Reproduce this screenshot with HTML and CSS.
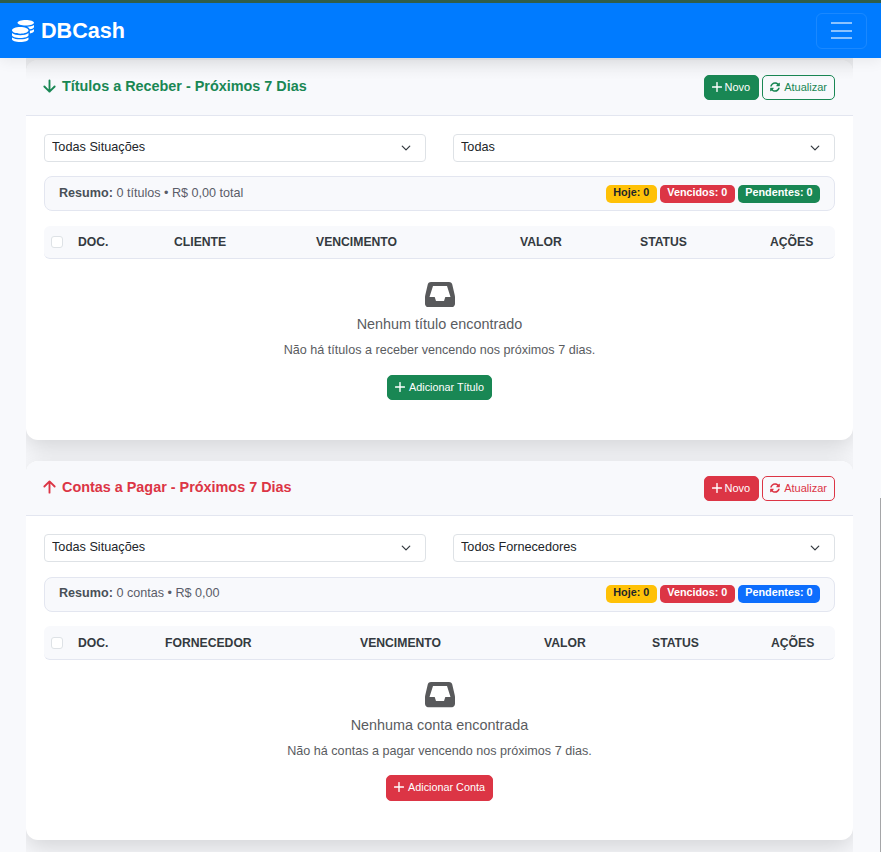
FILE: index.html
```html
<!DOCTYPE html>
<html lang="pt-BR">
<head>
<meta charset="utf-8">
<title>DBCash</title>
<link rel="stylesheet" href="styles.css">
</head>
<body>
<svg class="defs" width="0" height="0" aria-hidden="true">
  <symbol id="i-plus" viewBox="0 0 10 10"><path d="M5 .6v8.800M.6 5h8.800" fill="none" stroke="currentColor" stroke-width="1.400" stroke-linecap="round"/></symbol>
  <symbol id="i-sync" viewBox="0 0 512 512"><path fill="currentColor" d="M370.72 133.28C339.458 104.008 298.888 87.962 255.848 88c-77.458.068-144.328 53.178-162.791 126.85-1.344 5.363-6.122 9.15-11.651 9.15H24.103c-7.498 0-13.194-6.807-11.807-14.176C33.933 94.924 134.813 8 256 8c66.448 0 126.791 26.136 171.315 68.685L463.03 40.97C478.149 25.851 504 36.559 504 57.941V192c0 13.255-10.745 24-24 24H345.941c-21.382 0-32.090-25.851-16.971-40.971l41.750-41.749zM32 296h134.059c21.382 0 32.090 25.851 16.971 40.971l-41.750 41.750c31.262 29.273 71.835 45.319 114.876 45.280 77.418-.07 144.315-53.144 162.787-126.849 1.344-5.363 6.122-9.150 11.651-9.150h57.304c7.498 0 13.194 6.807 11.807 14.176C478.067 417.076 377.187 504 256 504c-66.448 0-126.791-26.136-171.315-68.685L48.970 471.030C33.851 486.149 8 475.441 8 454.059V320c0-13.255 10.745-24 24-24z"/></symbol>
  <symbol id="i-inbox" viewBox="0 0 30 25.500"><path fill="currentColor" fill-rule="evenodd" d="M6 0h18c1.500 0 2.700.9 3.200 2.300L29.700 13c.2.800.3 1.500.3 2.300v6.500c0 2-1.600 3.700-3.700 3.700H3.700C1.600 25.500 0 23.800 0 21.800v-6.500c0-.8.1-1.500.3-2.300L2.800 2.300C3.300.9 4.500 0 6 0zM8 4 4.500 15h5.200l1.300 4h8l1.300-4h5.200L22 4H8z"/></symbol>
  <symbol id="i-coins" viewBox="0 0 512 512"><path fill="currentColor" d="M0 405.300V448c0 35.300 86 64 192 64s192-28.700 192-64v-42.700C342.700 434.400 267.200 448 192 448S41.300 434.400 0 405.300zM320 128c106 0 192-28.700 192-64S426 0 320 0 128 28.700 128 64s86 64 192 64zM0 300.400V352c0 35.300 86 64 192 64s192-28.700 192-64v-51.600c-41.300 34-116.900 51.600-192 51.600S41.300 334.400 0 300.400zm416 11c57.300-11.100 96-31.700 96-55.400v-42.700c-23.200 16.400-57.300 27.600-96 34.500v63.600zM192 160C86 160 0 195.800 0 240s86 80 192 80 192-35.800 192-80-86-80-192-80zm219.300 56.300c60-10.800 100.700-32 100.700-56.300v-42.700c-35.500 25.100-96.500 38.600-160.700 41.800 29.500 14.300 51.200 33.500 60 57.200z"/></symbol>
</svg>

<header class="navbar">
  <a class="brand" href="#">
    <svg class="brand-icon"><use href="#i-coins"/></svg>
    <span>DBCash</span>
  </a>
  <button class="toggler" type="button" aria-label="Menu">
    <span></span><span></span><span></span>
  </button>
</header>

<main class="page">
  <div class="stack">
    <section class="card theme-green">
      <div class="card-head">
        <h2 class="card-title">
          <svg class="arrow" viewBox="0 0 16 16"><path d="M8 2v12M2.500 8.500 8 14l5.500-5.500" fill="none" stroke="currentColor" stroke-width="2" stroke-linecap="round" stroke-linejoin="round"/></svg>
          Títulos a Receber - Próximos 7 Dias
        </h2>
        <div class="head-actions">
          <button class="btn btn-solid" type="button"><svg class="plus"><use href="#i-plus"/></svg>Novo</button>
          <button class="btn btn-outline" type="button"><svg class="sync"><use href="#i-sync"/></svg>Atualizar</button>
        </div>
      </div>
      <div class="card-body">
        <div class="filters">
          <select class="select"><option>Todas Situações</option></select>
          <select class="select"><option>Todas</option></select>
        </div>
        <div class="summary">
          <p class="summary-text"><strong>Resumo:</strong> 0 títulos • R$ 0,00 total</p>
          <div class="badges">
            <span class="badge badge-warn">Hoje: 0</span>
            <span class="badge badge-danger">Vencidos: 0</span>
            <span class="badge badge-success">Pendentes: 0</span>
          </div>
        </div>
        <div class="thead cols-receber">
          <span class="check"></span><span>DOC.</span><span>CLIENTE</span><span>VENCIMENTO</span><span>VALOR</span><span>STATUS</span><span>AÇÕES</span>
        </div>
        <div class="empty">
          <svg class="empty-icon"><use href="#i-inbox"/></svg>
          <h3 class="empty-title">Nenhum título encontrado</h3>
          <p class="empty-text">Não há títulos a receber vencendo nos próximos 7 dias.</p>
          <button class="btn btn-solid btn-add" type="button"><svg class="plus"><use href="#i-plus"/></svg>Adicionar Título</button>
        </div>
      </div>
    </section>

    <section class="card theme-red">
      <div class="card-head">
        <h2 class="card-title">
          <svg class="arrow" viewBox="0 0 16 16"><path d="M8 14V2M2.500 7.500 8 2l5.500 5.500" fill="none" stroke="currentColor" stroke-width="2" stroke-linecap="round" stroke-linejoin="round"/></svg>
          Contas a Pagar - Próximos 7 Dias
        </h2>
        <div class="head-actions">
          <button class="btn btn-solid" type="button"><svg class="plus"><use href="#i-plus"/></svg>Novo</button>
          <button class="btn btn-outline" type="button"><svg class="sync"><use href="#i-sync"/></svg>Atualizar</button>
        </div>
      </div>
      <div class="card-body">
        <div class="filters">
          <select class="select"><option>Todas Situações</option></select>
          <select class="select"><option>Todos Fornecedores</option></select>
        </div>
        <div class="summary">
          <p class="summary-text"><strong>Resumo:</strong> 0 contas • R$ 0,00</p>
          <div class="badges">
            <span class="badge badge-warn">Hoje: 0</span>
            <span class="badge badge-danger">Vencidos: 0</span>
            <span class="badge badge-info">Pendentes: 0</span>
          </div>
        </div>
        <div class="thead cols-pagar">
          <span class="check"></span><span>DOC.</span><span>FORNECEDOR</span><span>VENCIMENTO</span><span>VALOR</span><span>STATUS</span><span>AÇÕES</span>
        </div>
        <div class="empty">
          <svg class="empty-icon"><use href="#i-inbox"/></svg>
          <h3 class="empty-title">Nenhuma conta encontrada</h3>
          <p class="empty-text">Não há contas a pagar vencendo nos próximos 7 dias.</p>
          <button class="btn btn-solid btn-add" type="button"><svg class="plus"><use href="#i-plus"/></svg>Adicionar Conta</button>
        </div>
      </div>
    </section>
  </div>
</main>
<div class="scroll-thumb"></div>
</body>
</html>
```

FILE: styles.css
```css
* { box-sizing: border-box; }

html, body { height: 100%; }

body {
  margin: 0;
  overflow: hidden;
  display: flex;
  flex-direction: column;
  background: #f8f9fc;
  font-family: "Liberation Sans", Arial, sans-serif;
  color: #212529;
  border-top: 3px solid #2f5d4a;
}

.defs { position: absolute; }

.navbar {
  position: relative;
  z-index: 2;
  flex: none;
  height: 55px;
  background: #007bff;
  display: flex;
  align-items: center;
  justify-content: space-between;
  padding: 0 12px;
  box-shadow: 0 2px 14px rgba(0, 0, 0, .08);
}

.brand {
  display: flex;
  align-items: center;
  gap: 7px;
  color: #fff;
  font-size: 21.6px;
  font-weight: 700;
  text-decoration: none;
}

.brand-icon { width: 22px; height: 22px; }

.toggler {
  width: 51px;
  height: 36px;
  margin-right: 2px;
  padding: 0;
  background: transparent;
  border: 1px solid rgba(255, 255, 255, .1);
  border-radius: 6px;
  display: flex;
  flex-direction: column;
  align-items: center;
  justify-content: center;
  gap: 5.5px;
}

.toggler span {
  display: block;
  width: 21px;
  height: 2px;
  background: rgba(255, 255, 255, .55);
}

.page {
  flex: 1;
  min-height: 0;
  padding: 0 28px 0 26px;
}

.stack {
  position: relative;
  height: 100%;
  overflow: hidden;
  padding-top: 2.4px;
}

.stack::before {
  content: "";
  position: absolute;
  z-index: 1;
  top: 0;
  left: 0;
  right: 0;
  height: 22px;
  background: linear-gradient(rgba(0, 0, 0, .06), rgba(0, 0, 0, 0));
}

.card {
  background: #fff;
  border-radius: 12px;
  box-shadow: 0 8px 24px rgba(0, 0, 0, .15);
  overflow: hidden;
  margin-bottom: 20.7px;
}

.card:last-child { margin-bottom: 0; }

.theme-green { --accent: #198754; }
.theme-red { --accent: #dc3545; }

.card-head {
  height: 55.4px;
  background: #f8f9fc;
  border-bottom: 1px solid #e3e6f0;
  display: flex;
  align-items: flex-start;
  justify-content: space-between;
  padding: 15px 18px 0 16px;
}

.card-title {
  margin: 0;
  display: flex;
  align-items: center;
  gap: 5px;
  color: var(--accent);
  font-size: 14.4px;
  font-weight: 700;
  line-height: 22px;
}

.arrow { width: 15px; height: 16px; }

.head-actions { display: flex; gap: 3px; }

.btn {
  display: inline-flex;
  align-items: center;
  justify-content: center;
  height: 25px;
  border-radius: 5px;
  border: 1px solid var(--accent);
  font-family: inherit;
  font-size: 11px;
  padding: 0 7.5px 1px;
}

.btn-solid { background: var(--accent); color: #fff; padding-left: 7px; }
.btn-outline { background: transparent; color: var(--accent); padding-right: 7px; }

.plus { width: 10px; height: 10px; margin-right: 3px; }
.sync { width: 10px; height: 10px; margin-right: 4px; }

.card-body { padding: 18px 18px 39.7px; }

.filters {
  display: grid;
  grid-template-columns: 1fr 1fr;
  gap: 27px;
}

.select {
  appearance: none;
  height: 28px;
  width: 100%;
  padding: 0 32px 2px 7px;
  font-family: inherit;
  font-size: 12.7px;
  color: #212529;
  border: 1px solid #dee2e6;
  border-radius: 4px;
  background: #fff url("data:image/svg+xml,%3csvg xmlns='http://www.w3.org/2000/svg' viewBox='0 0 16 16'%3e%3cpath fill='none' stroke='%23343a40' stroke-linecap='round' stroke-linejoin='round' stroke-width='2' d='m2 5 6 6 6-6'/%3e%3c/svg%3e") no-repeat right 13px top 8px / 12px 10px;
}

.summary {
  margin-top: 14.5px;
  height: 35px;
  display: flex;
  align-items: center;
  justify-content: space-between;
  padding: 0 14px;
  background: #f8f9fc;
  border: 1px solid #e3e6f0;
  border-radius: 8px;
}

.summary-text {
  margin: 0 0 2px;
  font-size: 12.6px;
  color: #5a5c69;
}

.summary-text strong { color: #495057; }

.badges { display: flex; gap: 3px; }

.badge {
  height: 18px;
  padding: 0 7.5px;
  border-radius: 5px;
  font-size: 10.8px;
  font-weight: 700;
  line-height: 15px;
  color: #fff;
}

.badge-warn { background: #ffc107; color: #212529; }
.badge-danger { background: #dc3545; }
.badge-success { background: #198754; }
.badge-info { background: #0d6efd; }

.thead {
  margin-top: 14.5px;
  height: 33.5px;
  display: grid;
  align-items: center;
  padding: 0.6px 0 0 7px;
  background: #f8f9fc;
  border-bottom: 1px solid #e3e6f0;
  border-radius: 6px;
  font-size: 12.2px;
  font-weight: 700;
  color: #343a40;
}

.cols-receber { grid-template-columns: 27px 96px 142px 204px 120px 130px 1fr; }
.cols-pagar { grid-template-columns: 27px 87px 195px 184px 108px 119px 1fr; }

.check {
  width: 12px;
  height: 12px;
  background: #fff;
  border: 1px solid #dee2e6;
  border-radius: 3px;
}

.empty {
  display: flex;
  flex-direction: column;
  align-items: center;
  padding-top: 22.5px;
}

.empty-icon { width: 30px; height: 25.5px; color: #58595b; }

.empty-title {
  margin: 8px 0 0;
  font-size: 14.4px;
  font-weight: 400;
  line-height: 18px;
  color: #5a5c5f;
}

.empty-text {
  margin: 9px 0 0;
  font-size: 12.6px;
  line-height: 16px;
  color: #5a5c5f;
}

.btn-add {
  height: 25.2px;
  margin-top: 16.8px;
  padding: 0 7.5px 1px;
  font-size: 10.8px;
}

.btn-add .plus { margin-right: 4px; }

.scroll-thumb {
  position: absolute;
  right: 0;
  top: 498px;
  bottom: 0;
  width: 1px;
  background: #a5a6a8;
}
```
